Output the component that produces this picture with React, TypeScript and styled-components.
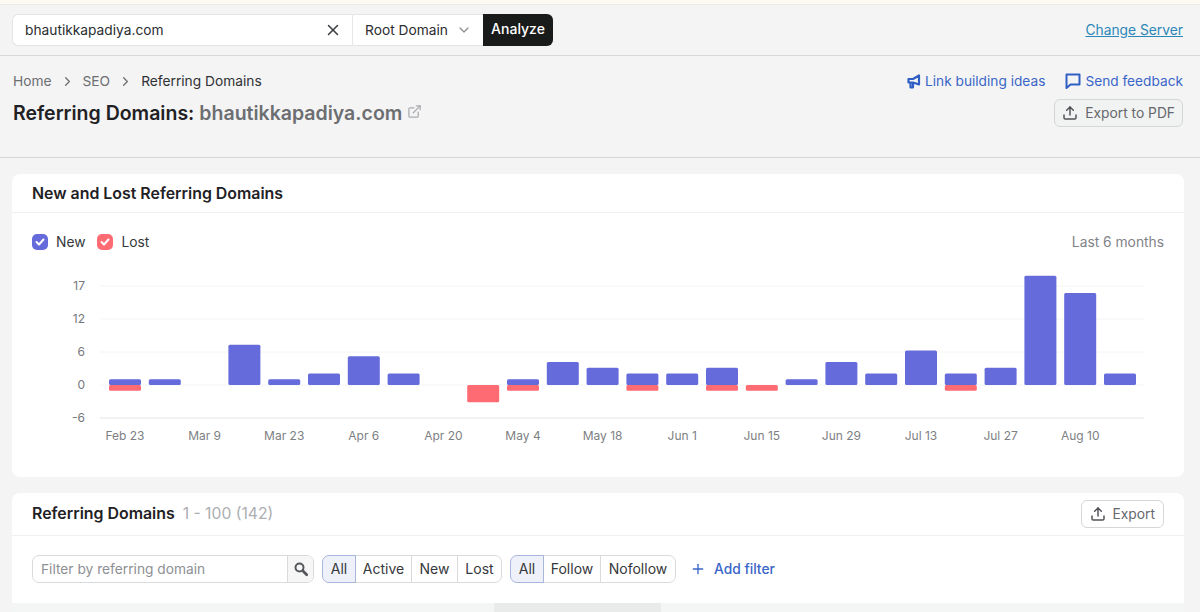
import React from 'react';
import styled, { createGlobalStyle } from 'styled-components';
import { ChevronDown, ChevronRight, ExternalLink, Plus, Upload, X } from 'lucide-react';

const GlobalStyle = createGlobalStyle`
    html, body {
        margin: 0;
        padding: 0;
        background: #f4f4f4;
        font-family: Inter, "Liberation Sans", sans-serif;
        color: #1f2124;
    }
    * {
        box-sizing: border-box;
    }
`;

const Page = styled.div`
    height: 612px;
    overflow: hidden;
    border-top: 4px solid #fbfbf3;
`;

const TopBar = styled.div`
    display: flex;
    align-items: center;
    justify-content: space-between;
    height: 52px;
    padding: 0 17px 1px 12px;
    border-top: 1px solid #ecece6;
    border-bottom: 1px solid #d6d7d8;
`;

const SearchGroup = styled.div`
    display: flex;
    height: 32px;
`;

const DomainField = styled.div`
    display: flex;
    align-items: center;
    justify-content: space-between;
    width: 341px;
    padding: 0 10px 0 12px;
    background: #fff;
    border: 1px solid #e3e4e5;
    border-right: 1px solid #e6e7e8;
    border-radius: 6px 0 0 6px;
    font-size: 13.75px;
    color: #2b2d30;
`;

const TypeSelect = styled.div`
    display: flex;
    align-items: center;
    gap: 8px;
    width: 130px;
    padding: 0 8px 0 12px;
    background: #fff;
    border-top: 1px solid #e3e4e5;
    border-bottom: 1px solid #e3e4e5;
    font-size: 13.75px;
    color: #2b2d30;
`;

const AnalyzeButton = styled.button`
    width: 70px;
    padding: 0 0 2px;
    border: none;
    border-radius: 0 6px 6px 0;
    background: #191a1a;
    color: #fff;
    font: 500 14px Inter, sans-serif;
`;

const ServerLink = styled.a`
    font-size: 13.8px;
    color: #2b87b8;
    text-decoration: underline;
`;

const Intro = styled.div`
    display: flex;
    justify-content: space-between;
    height: 102px;
    padding: 15px 17px 0 13px;
    border-bottom: 1px solid #d6d7d8;
`;

const Crumbs = styled.div`
    display: flex;
    align-items: center;
    height: 20px;
    font-size: 13.75px;
    color: #6c6e72;

    svg {
        margin: 0 8px;
    }
`;

const CurrentCrumb = styled.span`
    color: #2f3134;
`;

const Title = styled.h1`
    display: flex;
    align-items: center;
    margin: 8px 0 0;
    font-size: 19.5px;
    line-height: 28px;
    font-weight: 600;
    color: #1f2124;
`;

const TitleDomain = styled.span`
    margin-left: 5px;
    color: #6c6e72;
`;

const TitleIcon = styled(ExternalLink)`
    margin: -3px 0 0 5px;
    color: #a9abae;
`;

const IntroActions = styled.div`
    display: flex;
    flex-direction: column;
    align-items: flex-end;
    gap: 8px;
`;

const ActionLinks = styled.div`
    display: flex;
    height: 20px;
    gap: 20px;
`;

const ActionLink = styled.a`
    display: flex;
    align-items: center;
    gap: 4px;
    font-size: 13.7px;
    color: #3a66c8;
`;

const ExportButton = styled.button`
    display: flex;
    align-items: center;
    justify-content: center;
    gap: 7px;
    height: 28px;
    padding: 0 7px;
    background: #f1f2f2;
    border: 1px solid #d5d6d8;
    border-radius: 6px;
    font: 400 13.8px Inter, sans-serif;
    color: #66686c;

    svg {
        color: #4f5155;
    }
`;

const Card = styled.section`
    margin: 16px 16px 16px 12px;
    background: #fff;
    border-radius: 8px 8px 0 0;
`;

const ChartCard = styled(Card)`
    height: 303px;
    border-radius: 8px;
`;

const CardHeader = styled.div<{ $height: number }>`
    display: flex;
    align-items: center;
    justify-content: space-between;
    height: ${(p) => p.$height}px;
    padding: 0 20px;
    border-bottom: 1px solid #f0f1f1;
`;

const CardTitle = styled.h2`
    margin: 0;
    font-size: 15.9px;
    font-weight: 600;
    color: #1f2124;
`;

const Legend = styled.div`
    display: flex;
    align-items: center;
    justify-content: space-between;
    height: 58px;
    padding: 0 20px;
`;

const LegendItems = styled.div`
    display: flex;
    gap: 12px;
`;

const LegendItem = styled.label`
    display: flex;
    align-items: center;
    gap: 8px;
    font-size: 13.8px;
    color: #36383b;
`;

const LegendBox = styled.span<{ $color: string }>`
    display: flex;
    align-items: center;
    justify-content: center;
    width: 16px;
    height: 16px;
    border-radius: 5px;
    background: ${(p) => p.$color};
`;

const RangeLabel = styled.span`
    font-size: 13.8px;
    color: #818387;
`;

const ChartSvg = styled.svg`
    display: block;
    margin-top: -9px;
`;

const ListHeading = styled.div`
    display: flex;
    align-items: baseline;
    gap: 8px;
    padding-bottom: 2px;
`;

const ListRange = styled.span`
    font-size: 15.7px;
    color: #acaeb1;
`;

const CardExport = styled(ExportButton)`
    padding: 0 8px;
    background: #fff;
    margin-bottom: 1px;
`;

const Filters = styled.div`
    display: flex;
    align-items: center;
    gap: 8px;
    height: 67px;
    padding: 0 20px 2px;
`;

const FilterField = styled.div`
    display: flex;
    width: 282px;
    height: 28px;
    border: 1px solid #d9dadc;
    border-radius: 7px;
    overflow: hidden;
`;

const FilterText = styled.span`
    flex: 1;
    padding-left: 8px;
    font-size: 13.75px;
    line-height: 26px;
    color: #8e9094;
`;

const FilterSearch = styled.span`
    display: flex;
    align-items: center;
    justify-content: center;
    width: 26px;
    background: #f6f6f6;
    border-left: 1px solid #d9dadc;
`;

const Segments = styled.div`
    display: flex;
    height: 28px;
`;

const Segment = styled.button<{ $active?: boolean; $width: number }>`
    position: relative;
    z-index: ${(p) => (p.$active ? 1 : 0)};
    width: ${(p) => p.$width}px;
    height: 28px;
    padding: 0;
    margin-left: -1px;
    border: 1px solid ${(p) => (p.$active ? '#a9b6dc' : '#d9dadc')};
    background: ${(p) => (p.$active ? '#eef1fa' : '#fff')};
    font: 400 14px Inter, sans-serif;
    color: #36383b;

    &:first-child {
        margin-left: 0;
        border-radius: 7px 0 0 7px;
    }

    &:last-child {
        border-radius: 0 7px 7px 0;
    }
`;

const AddFilter = styled.a`
    display: flex;
    align-items: center;
    gap: 8px;
    margin-left: 6px;
    font-size: 13.8px;
    font-weight: 500;
    color: #3a66c8;
`;

const TableHead = styled.div`
    display: grid;
    grid-template-columns: 482px 167px 1fr;
    height: 20px;
    background: #f4f5f5;
`;

const SortedColumn = styled.div`
    grid-column: 2;
    background: #e9eaea;
`;

const Megaphone = () => (
    <svg width="16" height="16" viewBox="0 0 16 16" fill="none" stroke="#2f5fc4" strokeWidth="2.200" strokeLinejoin="round">
        <path d="M14 2.500v9L8 9.500H3.500V6H8z" />
        <path d="M5.500 9.500V14.500H8V10" />
    </svg>
);

const Feedback = () => (
    <svg width="16" height="16" viewBox="0 0 16 16" fill="none" stroke="#2f5fc4" strokeWidth="2" strokeLinejoin="round">
        <path d="M1.500 1.500h13v10H5.500L1.500 15z" />
    </svg>
);

const Check = () => (
    <svg width="10" height="8" viewBox="0 0 10 8" fill="none" stroke="#fff" strokeWidth="2" strokeLinecap="round" strokeLinejoin="round">
        <path d="M1.500 4l2.500 2.500 4.500-5" />
    </svg>
);

const Magnifier = () => (
    <svg width="16" height="16" viewBox="0 0 16 16" fill="none" stroke="#55575b" strokeLinecap="round">
        <circle cx="6.500" cy="6.500" r="4" strokeWidth="2" />
        <path d="M10 10l3.700 3.700" strokeWidth="2.800" />
    </svg>
);

const NEW_COLOR = '#666bdc';
const LOST_COLOR = '#ff6b73';
const UNIT = 5.75;
const ZERO_Y = 211;

const bars: [number, number][] = [
    [1, 1], [1, 0], [0, 0], [7, 0], [1, 0], [2, 0], [5, 0], [2, 0], [0, 0], [0, 3], [1, 1], [4, 0], [3, 0],
    [2, 1], [2, 0], [3, 1], [0, 1], [1, 0], [4, 0], [2, 0], [6, 0], [2, 1], [3, 0], [19, 0], [16, 0], [2, 0],
];

const dates = ['Feb 23', 'Mar 9', 'Mar 23', 'Apr 6', 'Apr 20', 'May 4', 'May 18', 'Jun 1', 'Jun 15', 'Jun 29', 'Jul 13', 'Jul 27', 'Aug 10'];

const ticks: [string, number][] = [['17', 112], ['12', 145], ['6', 178], ['0', 211], ['-6', 244]];

const BarChart = () => (
    <ChartSvg width="1172" height="190" viewBox="0 88 1172 190" fontFamily="Inter, sans-serif" fontSize="12">
        {ticks.map(([label, y]) => (
            <g key={label}>
                <line x1="88" x2="1132" y1={y} y2={y} stroke={label === '-6' ? '#e3e4e5' : '#f3f4f4'} />
                <text x="73" y={y + 4} textAnchor="end" fill="#75777b">{label}</text>
            </g>
        ))}
        {bars.map(([added, lost], i) => {
            const x = 97 + i * 39.8;
            return (
                <g key={i}>
                    {added > 0 && <rect x={x} y={ZERO_Y - added * UNIT} width="32" height={added * UNIT} rx="1.500" fill={NEW_COLOR} />}
                    {lost > 0 && <rect x={x} y={ZERO_Y} width="32" height={lost * UNIT} rx="1.500" fill={LOST_COLOR} />}
                </g>
            );
        })}
        {dates.map((date, i) => (
            <text key={date} x={113 + i * 79.6} y="266" textAnchor="middle" fill="#7d7f83">{date}</text>
        ))}
    </ChartSvg>
);

const App: React.FC = () => {
    return (
        <>
            <GlobalStyle />
            <Page>
                <TopBar>
                    <SearchGroup>
                        <DomainField>
                            bhautikkapadiya.com
                            <X size={18} color="#3a3c3f" strokeWidth={2} />
                        </DomainField>
                        <TypeSelect>
                            Root Domain
                            <ChevronDown size={16} color="#8e9094" />
                        </TypeSelect>
                        <AnalyzeButton>Analyze</AnalyzeButton>
                    </SearchGroup>
                    <ServerLink>Change Server</ServerLink>
                </TopBar>
                <Intro>
                    <div>
                        <Crumbs>
                            Home
                            <ChevronRight size={15} color="#6c6e72" />
                            SEO
                            <ChevronRight size={15} color="#6c6e72" />
                            <CurrentCrumb>Referring Domains</CurrentCrumb>
                        </Crumbs>
                        <Title>
                            Referring Domains:
                            <TitleDomain>bhautikkapadiya.com</TitleDomain>
                            <TitleIcon size={15} />
                        </Title>
                    </div>
                    <IntroActions>
                        <ActionLinks>
                            <ActionLink><Megaphone />Link building ideas</ActionLink>
                            <ActionLink><Feedback />Send feedback</ActionLink>
                        </ActionLinks>
                        <ExportButton>
                            <Upload size={16} strokeWidth={2.2} />
                            Export to PDF
                        </ExportButton>
                    </IntroActions>
                </Intro>
                <ChartCard>
                    <CardHeader $height={39}>
                        <CardTitle>New and Lost Referring Domains</CardTitle>
                    </CardHeader>
                    <Legend>
                        <LegendItems>
                            <LegendItem><LegendBox $color={NEW_COLOR}><Check /></LegendBox>New</LegendItem>
                            <LegendItem><LegendBox $color={LOST_COLOR}><Check /></LegendBox>Lost</LegendItem>
                        </LegendItems>
                        <RangeLabel>Last 6 months</RangeLabel>
                    </Legend>
                    <BarChart />
                </ChartCard>
                <Card>
                    <CardHeader $height={43}>
                        <ListHeading>
                            <CardTitle>Referring Domains</CardTitle>
                            <ListRange>1 - 100 (142)</ListRange>
                        </ListHeading>
                        <CardExport>
                            <Upload size={16} strokeWidth={2.2} />
                            Export
                        </CardExport>
                    </CardHeader>
                    <Filters>
                        <FilterField>
                            <FilterText>Filter by referring domain</FilterText>
                            <FilterSearch><Magnifier /></FilterSearch>
                        </FilterField>
                        <Segments>
                            <Segment $active $width={34}>All</Segment>
                            <Segment $width={57}>Active</Segment>
                            <Segment $width={47}>New</Segment>
                            <Segment $width={45}>Lost</Segment>
                        </Segments>
                        <Segments>
                            <Segment $active $width={34}>All</Segment>
                            <Segment $width={58}>Follow</Segment>
                            <Segment $width={76}>Nofollow</Segment>
                        </Segments>
                        <AddFilter><Plus size={16} />Add filter</AddFilter>
                    </Filters>
                    <TableHead>
                        <SortedColumn />
                    </TableHead>
                </Card>
            </Page>
        </>
    );
};

export default App;
